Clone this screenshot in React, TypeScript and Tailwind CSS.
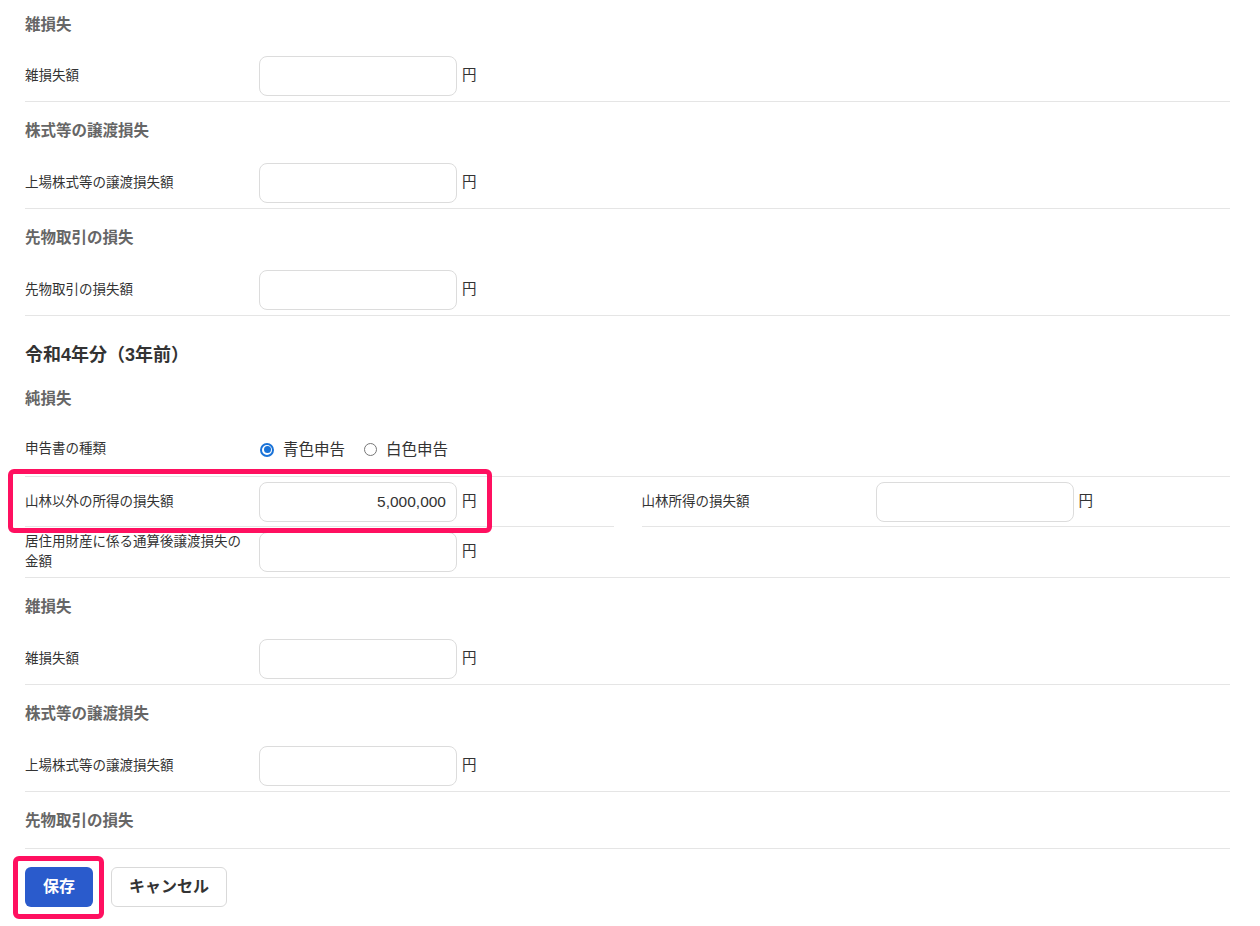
import React from "react";

const font = {
  fontFamily: '"Liberation Sans", "Noto Sans CJK JP", sans-serif',
};

function SectionHeading({ children, first, last }: { children: React.ReactNode; first?: boolean; last?: boolean }) {
  const size = first ? "h-[51px] pt-[15px]" : last ? "h-[57px] pt-[19px]" : "h-[56px] pt-[19px]";
  return (
    <div
      className={`text-[15.5px] font-bold leading-5 text-[#666] ${size} ${
        last ? "border-b border-[#e5e5e5]" : ""
      }`}
    >
      {children}
    </div>
  );
}

function AmountField({ label, value }: { label: React.ReactNode; value?: string }) {
  return (
    <div className="flex items-center">
      <div className="w-[234px] shrink-0 pr-3 text-[13.5px] leading-5 text-[#333]">{label}</div>
      <input
        readOnly
        value={value ?? ""}
        className="h-[40px] w-[198px] rounded-lg border border-[#dcdcdc] bg-white px-[10px] text-right text-[15.5px] text-[#333] outline-none"
      />
      <span className="ml-[5px] text-[14.5px] text-[#333]">円</span>
    </div>
  );
}

function FieldRow({ label, value }: { label: React.ReactNode; value?: string }) {
  return (
    <div className="flex h-[51px] items-center border-b border-[#e5e5e5] pb-[1px]">
      <AmountField label={label} value={value} />
    </div>
  );
}

function Radio({ checked, label }: { checked?: boolean; label: string }) {
  return (
    <label className="flex items-center gap-[9px] text-[15.5px] text-[#333]">
      {checked ? (
        <span className="flex h-[14px] w-[14px] items-center justify-center rounded-full border-2 border-[#1a73d8] bg-white">
          <span className="h-[7px] w-[7px] rounded-full bg-[#1a73d8]" />
        </span>
      ) : (
        <span className="h-[13px] w-[13px] rounded-full border border-[#777] bg-white" />
      )}
      {label}
    </label>
  );
}

export default function App() {
  return (
    <div className="relative min-h-[926px] bg-white pl-[25px] pr-[30px]" style={font}>
      {/* previous year block (tail) */}
      <SectionHeading first>雑損失</SectionHeading>
      <FieldRow label="雑損失額" />
      <SectionHeading>株式等の譲渡損失</SectionHeading>
      <FieldRow label="上場株式等の譲渡損失額" />
      <SectionHeading>先物取引の損失</SectionHeading>
      <FieldRow label="先物取引の損失額" />

      {/* 令和4年分 */}
      <div className="h-[54px] pt-[29px] text-[18px] font-bold leading-5 text-[#333]">令和4年分（3年前）</div>
      <SectionHeading>純損失</SectionHeading>
      <div className="flex h-[51px] items-center border-b border-[#e5e5e5] pb-[3px]">
        <div className="w-[234px] shrink-0 text-[13.5px] text-[#333]">申告書の種類</div>
        <div className="flex items-center gap-[19px] pl-[1px]">
          <Radio checked label="青色申告" />
          <Radio label="白色申告" />
        </div>
      </div>
      <div className="grid grid-cols-2 gap-[28px]">
        <div className="flex h-[50px] items-center border-b border-[#e5e5e5] pt-[1px]">
          <AmountField label="山林以外の所得の損失額" value="5,000,000" />
        </div>
        <div className="flex h-[50px] items-center border-b border-[#e5e5e5] pt-[1px]">
          <AmountField label="山林所得の損失額" />
        </div>
      </div>
      <FieldRow
        label={
          <>
            居住用財産に係る通算後譲渡損失の
            <br />
            金額
          </>
        }
      />
      <SectionHeading>雑損失</SectionHeading>
      <FieldRow label="雑損失額" />
      <SectionHeading>株式等の譲渡損失</SectionHeading>
      <FieldRow label="上場株式等の譲渡損失額" />
      <SectionHeading last>先物取引の損失</SectionHeading>

      <div className="flex gap-[18px] pt-[18px]">
        <button className="h-[40px] w-[68px] rounded-md bg-[#2a5bcc] text-[16px] font-bold text-white">保存</button>
        <button className="h-[40px] w-[116px] rounded-md border border-[#d9d9d9] bg-white text-[16px] font-bold text-[#333]">
          キャンセル
        </button>
      </div>

      {/* highlight overlays */}
      <div className="pointer-events-none absolute left-[8px] top-[469px] h-[64px] w-[484px] rounded-md border-[5px] border-[#ff1060]" />
      <div className="pointer-events-none absolute left-[13px] top-[856px] h-[63px] w-[91px] rounded-md border-[5px] border-[#ff1060]" />
    </div>
  );
}
